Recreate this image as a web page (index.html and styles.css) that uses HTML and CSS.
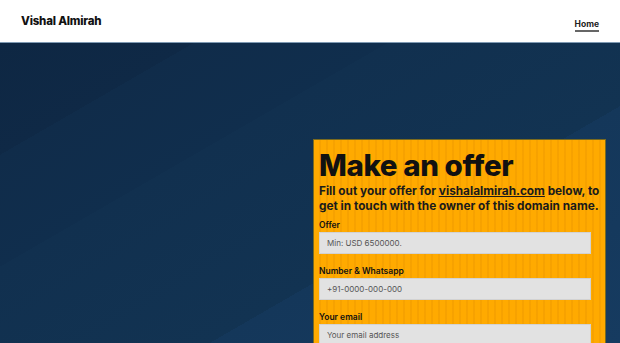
FILE: index.html
```html
<!DOCTYPE html>
<html lang="en">
<head>
  <meta charset="UTF-8">
  <meta name="viewport" content="width=device-width, initial-scale=1.0">
  <title>Vishal Almirah</title>
  <link rel="stylesheet" href="styles.css">
</head>
<body>
  <header class="site-header">
    <a class="brand" href="#">Vishal Almirah</a>
    <nav class="nav">
      <a class="nav-link" href="#">Home</a>
    </nav>
  </header>
  <main class="hero">
    <div class="offer-card">
      <h1>Make an offer</h1>
      <p class="lead">Fill out your offer for <a href="#">vishalalmirah.com</a> below, to get in touch with the owner of this domain name.</p>
      <form class="offer-form">
        <label for="offer">Offer</label>
        <input id="offer" type="text" placeholder="Min: USD 6500000.">
        <label for="phone">Number &amp; Whatsapp</label>
        <input id="phone" type="text" placeholder="+91-0000-000-000">
        <label for="email">Your email</label>
        <input id="email" type="email" placeholder="Your email address">
      </form>
    </div>
  </main>
</body>
</html>
```

FILE: styles.css
```css
body {
  font-family: Inter, "Noto Sans", sans-serif;
  margin: 0;
  padding: 0;
  color: #111;
  overflow: hidden;
}

.site-header {
  display: flex;
  justify-content: space-between;
  align-items: center;
  height: 43px;
  padding: 0 21px;
  background: #fff;
  border-bottom: 1px solid #7f9ab3;
  box-sizing: border-box;
}

.brand {
  font-size: 11.5px;
  font-weight: 800;
  color: #111;
  text-decoration: none;
  letter-spacing: -0.2px;
}

.nav-link {
  font-size: 8.5px;
  font-weight: 700;
  color: #222;
  text-decoration: none;
  border-bottom: 2px solid #666;
  padding-bottom: 1px;
}

.hero {
  height: 300px;
  display: flex;
  justify-content: flex-end;
  align-items: flex-start;
  padding: 96px 14px 0 0;
  box-sizing: border-box;
  overflow: hidden;
  background:
    linear-gradient(150deg,
      #0e2743 0%, #0f2946 17%,
      #102c4a 17%, #102e4d 34%,
      #11304f 34%, #123352 64%,
      #14375a 64%, #163b60 100%);
}

.offer-card {
  width: 293px;
  box-sizing: border-box;
  padding: 6px 14px 12px 5px;
  border: 1px solid #7a6a1e;
  border-bottom: none;
  background:
    repeating-linear-gradient(90deg,
      rgba(255, 255, 255, 0) 0px,
      rgba(255, 255, 255, 0) 5px,
      rgba(210, 125, 0, 0.18) 5px,
      rgba(210, 125, 0, 0.18) 7px),
    #ffaa00;
}

.offer-card h1 {
  margin: 0;
  font-size: 29.5px;
  font-weight: 800;
  letter-spacing: -0.4px;
  line-height: 38px;
}

.lead {
  margin: 0 -10px 6px 0;
  font-size: 11.8px;
  font-weight: 700;
  line-height: 15px;
  color: #1b1b1b;
}

.lead a {
  color: #1b1b1b;
}

.offer-form {
  display: flex;
  flex-direction: column;
}

.offer-form label {
  font-size: 8.5px;
  font-weight: 600;
  margin-bottom: 2px;
  color: #111;
}

.offer-form input {
  height: 22px;
  margin: 0 0 12px;
  padding: 0 7px;
  border: 1px solid #d2d2d2;
  background: #e2e2e2;
  font-family: inherit;
  font-size: 8px;
  box-sizing: border-box;
}

.offer-form input::placeholder {
  color: #555;
}
```
